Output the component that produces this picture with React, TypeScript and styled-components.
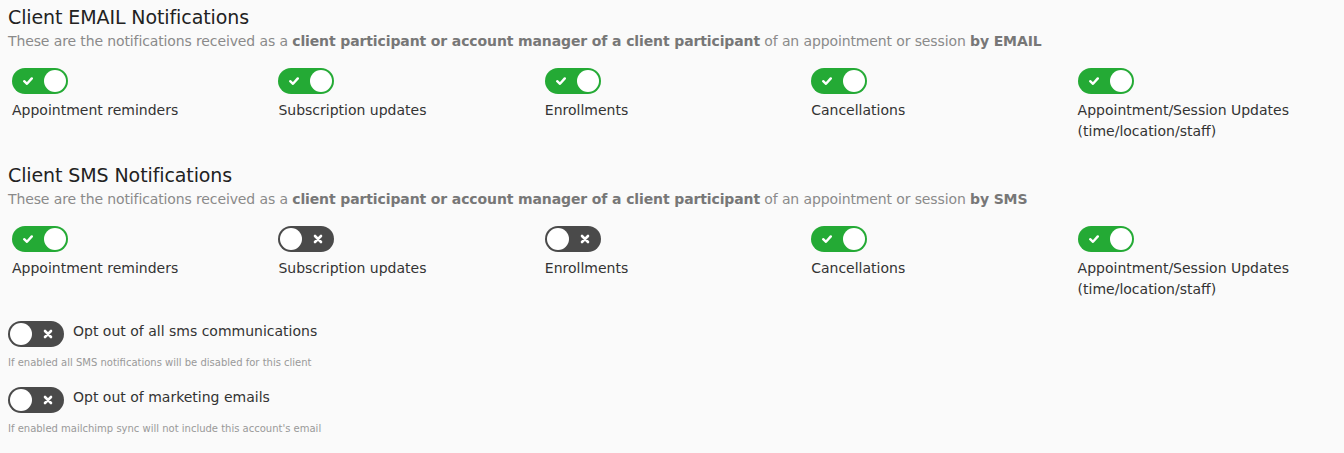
import React from "react";
import styled, { createGlobalStyle } from "styled-components";

const Global = createGlobalStyle`
  html, body { margin: 0; padding: 0; background: #fafafa; }
  body { font-family: "DejaVu Sans", "Open Sans", sans-serif; color: #333; }
`;

const Page = styled.div`
  padding: 6px 4px 0 8px;
  width: 1332px;
`;

const Section = styled.section`
  margin-bottom: 22px;
`;

const Title = styled.h2`
  margin: 0;
  font-size: 19px;
  line-height: 22px;
  letter-spacing: -0.1px;
  font-weight: 400;
  color: #222;
`;

const Desc = styled.p`
  margin: 3px 0 0;
  font-size: 14px;
  line-height: 20px;
  letter-spacing: -0.12px;
  color: #8a8a8a;
  b { color: #777; font-weight: 700; }
`;

const Grid = styled.div`
  display: grid;
  grid-template-columns: repeat(5, 1fr);
  margin-top: 17px;
`;

const Item = styled.div`
  display: flex;
  flex-direction: column;
  align-items: flex-start;
  padding-left: 4px;
`;

const Label = styled.div`
  margin-top: 6px;
  font-size: 14px;
  line-height: 21px;
  color: #333;
`;

const Track = styled.div<{ $on: boolean }>`
  position: relative;
  width: 56px;
  height: 26px;
  border-radius: 13px;
  background: ${(p) => (p.$on ? "#24aa35" : "#4a4a4a")};
  flex-shrink: 0;
`;

const Knob = styled.span<{ $on: boolean }>`
  position: absolute;
  top: 2px;
  left: ${(p) => (p.$on ? "32px" : "2px")};
  width: 22px;
  height: 22px;
  border-radius: 50%;
  background: #fff;
`;

const Glyph = styled.svg<{ $on: boolean }>`
  position: absolute;
  top: 8px;
  left: ${(p) => (p.$on ? "11px" : "35px")};
  width: 10px;
  height: 10px;
`;

const Switch = ({ on }: { on: boolean }) => (
  <Track $on={on}>
    <Knob $on={on} />
    <Glyph $on={on} viewBox="0 0 10 10">
      {on ? (
        <path d="M1.2 5.2 L4 7.8 L8.8 2.4" fill="none" stroke="#fff" strokeWidth="2.4" strokeLinecap="round" strokeLinejoin="round" />
      ) : (
        <path d="M2 2 L8 8 M8 2 L2 8" fill="none" stroke="#fff" strokeWidth="2.6" strokeLinecap="round" />
      )}
    </Glyph>
  </Track>
);

const OptRow = styled.div`
  display: flex;
  align-items: flex-start;
  gap: 9px;
`;

const OptLabel = styled.div`
  font-size: 14px;
  line-height: 20px;
  color: #333;
`;

const Help = styled.div`
  margin: 9px 0 17px;
  font-size: 10px;
  line-height: 14px;
  color: #999;
`;

const OptBlock = styled.div`
  margin-top: -1px;
`;

const labels: React.ReactNode[] = [
  "Appointment reminders",
  "Subscription updates",
  "Enrollments",
  "Cancellations",
  <>Appointment/Session Updates<br />(time/location/staff)</>,
];

const NotifSection = ({ title, by, states }: { title: string; by: string; states: boolean[] }) => (
  <Section>
    <Title>{title}</Title>
    <Desc>
      These are the notifications received as a <b>client participant or account manager of a client participant</b> of an appointment or session <b>by {by}</b>
    </Desc>
    <Grid>
      {states.map((on, i) => (
        <Item key={i}>
          <Switch on={on} />
          <Label>{labels[i]}</Label>
        </Item>
      ))}
    </Grid>
  </Section>
);

export default function App() {
  return (
    <>
      <Global />
      <Page>
        <NotifSection title="Client EMAIL Notifications" by="EMAIL" states={[true, true, true, true, true]} />
        <NotifSection title="Client SMS Notifications" by="SMS" states={[true, false, false, true, true]} />
        <OptBlock>
          <OptRow>
            <Switch on={false} />
            <OptLabel>Opt out of all sms communications</OptLabel>
          </OptRow>
          <Help>If enabled all SMS notifications will be disabled for this client</Help>
          <OptRow>
            <Switch on={false} />
            <OptLabel>Opt out of marketing emails</OptLabel>
          </OptRow>
          <Help>If enabled mailchimp sync will not include this account's email</Help>
        </OptBlock>
      </Page>
    </>
  );
}
